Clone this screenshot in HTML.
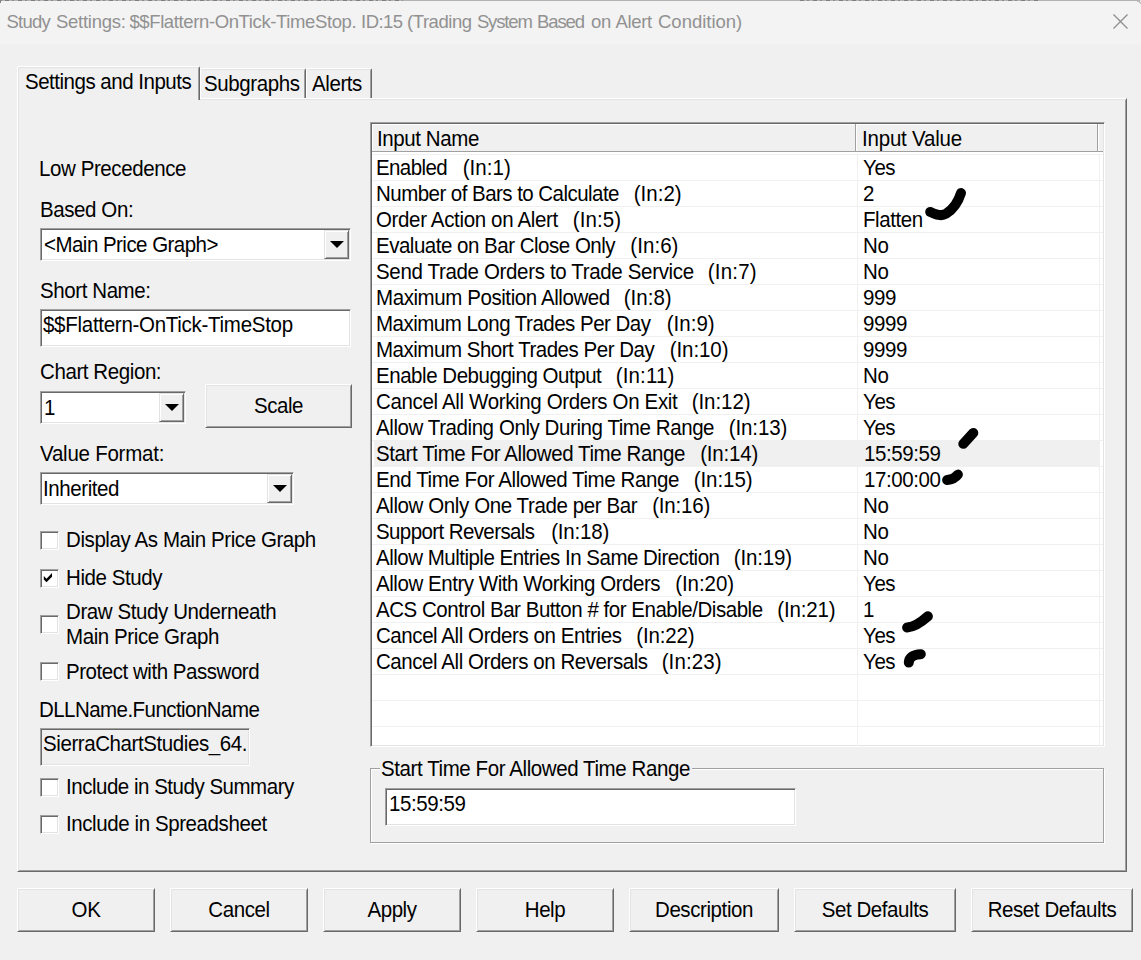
<!DOCTYPE html>
<html><head><meta charset="utf-8"><title>Study Settings</title>
<style>
*{box-sizing:border-box;margin:0;padding:0}
html,body{width:1141px;height:960px;overflow:hidden;background:#f0f0f0}
body{position:relative;font-family:"Liberation Sans",Arial,sans-serif;font-size:20.5px;color:#000;line-height:24px;-webkit-text-stroke:0}
.abs{position:absolute;white-space:nowrap}
#titlebar{position:absolute;left:0;top:0;width:1141px;height:44px;background:#f3f3f3}
#title{position:absolute;left:7px;top:10px;font-size:18.5px;color:#919191;white-space:nowrap;line-height:24px;letter-spacing:-0.37px;-webkit-text-stroke:0}
.sunken{position:absolute;background:#fff;border:1px solid;border-color:#a0a0a0 #fff #fff #a0a0a0;box-shadow:inset 1px 1px 0 #696969,inset -1px -1px 0 #e3e3e3}
.raised{position:absolute;background:#f0f0f0;border:1px solid;border-color:#e3e3e3 #696969 #696969 #e3e3e3;box-shadow:inset 1px 1px 0 #fff,inset -1px -1px 0 #a0a0a0}
.btn{position:absolute;background:#f0f0f0;border:1px solid;border-color:#fff #696969 #696969 #fff;box-shadow:inset 1px 1px 0 #e3e3e3,inset -1px -1px 0 #a0a0a0;text-align:center;white-space:nowrap}
.lbl,.tx{position:absolute;white-space:nowrap;line-height:24px;letter-spacing:-0.41px;transform:scaleY(1.066);transform-origin:0 0}
.c{display:inline-block;letter-spacing:-0.41px;transform:scaleY(1.066);transform-origin:50% 50%}
.cb{position:absolute;width:19px;height:19px;background:#fff;border:1px solid;border-color:#a0a0a0 #fff #fff #a0a0a0;box-shadow:inset 1px 1px 0 #696969,inset -1px -1px 0 #e3e3e3}
.arrow{position:absolute;width:0;height:0;border-left:7px solid transparent;border-right:7px solid transparent;border-top:7px solid #000}
.row{position:absolute;left:0;width:731px;height:26px;border-top:1px solid #f0f0f0}
.row span{position:absolute;top:0px;line-height:24px;white-space:nowrap;letter-spacing:-0.41px;transform:scaleY(1.066);transform-origin:0 0}
.row .n{left:4px}
.row .v{left:491px}
.row .k{left:100px}
.row.sel:before{content:"";position:absolute;left:2px;top:0;width:725px;height:25px;background:#f0f0f0}
.vl{position:absolute;top:0;width:1px;height:592px;background:#f0f0f0}
</style></head><body>
<div id="titlebar"><div id="title"><span style="position:absolute;left:-0.5px;letter-spacing:-0.76px">Study </span><span style="position:absolute;left:49.0px;letter-spacing:-0.26px">Settings: </span><span style="position:absolute;left:122.4px;letter-spacing:-0.38px">$$Flattern-OnTick-TimeStop. </span><span style="position:absolute;left:354.1px;letter-spacing:-0.56px">ID:15 </span><span style="position:absolute;left:400.0px;letter-spacing:-0.44px">(Trading </span><span style="position:absolute;left:469.9px;letter-spacing:-1.14px">System </span><span style="position:absolute;left:530.1px;letter-spacing:-1.12px">Based </span><span style="position:absolute;left:583.9px;letter-spacing:-0.28px">on </span><span style="position:absolute;left:608.4px;letter-spacing:-0.32px">Alert </span><span style="position:absolute;left:651.0px;letter-spacing:-0.01px">Condition) </span></div>
<svg class="abs" style="left:1113px;top:14px" width="15" height="15" viewBox="0 0 15 15"><path d="M0.5 0.5 L14.5 14.5 M14.5 0.5 L0.5 14.5" stroke="#8d8d8d" stroke-width="1.25" fill="none"/></svg>
</div>

<!-- top edge -->
<div class="abs" style="left:0;top:0;width:1141px;height:1px;background:#b2b2b2"></div>
<div class="abs" style="left:5px;top:0;width:398px;height:1px;background:repeating-linear-gradient(90deg,#7e7e7e 0 4px,#b2b2b2 4px 7px,#8a8a8a 7px 9px,#b2b2b2 9px 13px)"></div>
<div class="abs" style="left:800px;top:0;width:240px;height:1px;background:repeating-linear-gradient(90deg,#7e7e7e 0 4px,#b2b2b2 4px 7px,#8a8a8a 7px 9px,#b2b2b2 9px 13px)"></div>
<div class="abs" style="left:0;top:0;width:1px;height:3px;background:#828282"></div>
<div class="abs" style="left:1px;top:0;width:1px;height:1px;background:#8a8a8a"></div>
<div class="abs" style="left:1137px;top:1px;width:3px;height:1px;background:#bcbcbc"></div>
<div class="abs" style="left:1139px;top:2px;width:2px;height:1px;background:#bcbcbc"></div>
<div class="abs" style="left:1140px;top:3px;width:1px;height:1px;background:#c4c4c4"></div>
<div class="abs" style="left:1140px;top:0;width:1px;height:1px;background:#e4e4e4"></div>

<!-- tab panel -->
<div id="panel" class="abs" style="left:17px;top:98px;width:1110px;height:774px;border:1px solid;border-color:#fff #696969 #696969 #fff;box-shadow:inset 1px 1px 0 #e3e3e3,inset -1px -1px 0 #a0a0a0"></div>
<!-- tabs -->
<div id="tab1" class="abs" style="left:17px;top:66px;width:183px;height:34px;background:#f0f0f0;border:1px solid;border-color:#fff #696969 transparent #fff;border-bottom:none;box-shadow:inset 1px 1px 0 #e3e3e3,inset -1px 0 0 #a0a0a0;border-radius:2px 2px 0 0"><span class="tx" style="left:7px;top:2px;letter-spacing:-0.49px">Settings and Inputs</span></div>
<div id="tab2" class="abs" style="left:200px;top:68px;width:106px;height:30px;border:1px solid;border-color:#fff #696969 transparent #fff;border-bottom:none;box-shadow:inset 0 1px 0 #e3e3e3,inset -1px 0 0 #a0a0a0;border-radius:2px 2px 0 0"><span class="tx" style="left:3px;top:2px">Subgraphs</span></div>
<div id="tab3" class="abs" style="left:306px;top:68px;width:66px;height:30px;border:1px solid;border-color:#fff #696969 transparent #fff;border-bottom:none;box-shadow:inset 0 1px 0 #e3e3e3,inset -1px 0 0 #a0a0a0;border-radius:2px 2px 0 0"><span class="tx" style="left:5px;top:2px">Alerts</span></div>

<!-- left column -->
<div class="lbl" style="left:39px;top:156px">Low Precedence</div>
<div class="lbl" style="left:40px;top:197px">Based On:</div>
<div class="sunken" style="left:40px;top:228px;width:311px;height:33px"><span class="lbl" style="left:3px;top:3px;letter-spacing:-0.53px">&lt;Main Price Graph&gt;</span>
  <div class="raised" style="left:283px;top:1px;width:25px;height:29px"><i class="arrow" style="left:5px;top:10px"></i></div></div>
<div class="lbl" style="left:40px;top:278px">Short Name:</div>
<div class="sunken" style="left:40px;top:309px;width:311px;height:38px"><span class="lbl" style="left:2px;top:2px;letter-spacing:-0.28px">$$Flattern-OnTick-TimeStop</span></div>
<div class="lbl" style="left:40px;top:359px">Chart Region:</div>
<div class="sunken" style="left:40px;top:391px;width:146px;height:33px"><span class="lbl" style="left:3px;top:3px">1</span>
  <div class="raised" style="left:118px;top:1px;width:25px;height:29px"><i class="arrow" style="left:5px;top:10px"></i></div></div>
<div class="btn" style="left:205px;top:384px;width:147px;height:44px;line-height:42px"><span class="c">Scale</span></div>
<div class="lbl" style="left:40px;top:441px;letter-spacing:-0.24px">Value Format:</div>
<div class="sunken" style="left:40px;top:472px;width:254px;height:33px"><span class="lbl" style="left:2px;top:3px">Inherited</span>
  <div class="raised" style="left:226px;top:1px;width:25px;height:29px"><i class="arrow" style="left:5px;top:10px"></i></div></div>

<div class="cb" style="left:40px;top:531px"></div><div class="lbl" style="left:66px;top:527px">Display As Main Price Graph</div>
<div class="cb" style="left:40px;top:569px"><svg class="abs" style="left:0;top:0" width="17" height="17" viewBox="0 0 17 17"><path d="M2.8 6 L5.5 8.7 L11 3 L11 6.7 L5.5 12.2 L2.8 9.5 Z" fill="#000"/></svg></div><div class="lbl" style="left:66px;top:565px">Hide Study</div>
<div class="cb" style="left:40px;top:615px"></div><div class="lbl" style="left:66px;top:599px;line-height:23.45px">Draw Study Underneath<br>Main Price Graph</div>
<div class="cb" style="left:40px;top:662px"></div><div class="lbl" style="left:66px;top:659px;letter-spacing:-0.46px">Protect with Password</div>
<div class="lbl" style="left:39px;top:697px;letter-spacing:-0.55px">DLLName.FunctionName</div>
<div class="sunken" style="left:40px;top:728px;width:210px;height:38px;background:#f0f0f0"><span class="lbl" style="left:2px;top:2px">SierraChartStudies_64.</span></div>
<div class="cb" style="left:40px;top:778px"></div><div class="lbl" style="left:66px;top:774px;letter-spacing:-0.48px">Include in Study Summary</div>
<div class="cb" style="left:40px;top:815px"></div><div class="lbl" style="left:66px;top:811px">Include in Spreadsheet</div>

<!-- list view -->
<div id="list" class="sunken" style="left:370px;top:122px;width:735px;height:625px;overflow:hidden">
  <div id="hdr" style="position:absolute;left:1px;top:1px;width:731px;height:28px;background:#f0f0f0;border-bottom:1px solid #a0a0a0">
    <div style="position:absolute;left:0;top:0;width:484px;height:27px;border-right:1px solid #a0a0a0;box-shadow:inset 1px 1px 0 #fff,1px 0 0 #fff"><span class="tx" style="left:5px;top:2px">Input Name</span></div>
    <div style="position:absolute;left:484px;top:0;width:242px;height:27px;border-right:1px solid #a0a0a0;box-shadow:inset 0 1px 0 #fff,1px 0 0 #fff"><span class="tx" style="left:6px;top:2px;letter-spacing:-0.2px">Input Value</span></div>
  </div>
  <div id="rows" style="position:absolute;left:1px;top:31px;width:731px;height:592px">
    <div class="row" style="top:0px"><span class="n" style="letter-spacing:-0.60px">Enabled &nbsp; </span><span class="k" style="left:90.7px;letter-spacing:0.06px">(In:1) </span><span class="v">Yes</span></div>
    <div class="row" style="top:26px"><span class="n" style="letter-spacing:-0.54px">Number of Bars to Calculate &nbsp; </span><span class="k" style="left:261.8px;letter-spacing:-0.00px">(In:2) </span><span class="v">2</span></div>
    <div class="row" style="top:52px"><span class="n" style="letter-spacing:-0.35px">Order Action on Alert &nbsp; </span><span class="k" style="left:200.7px;letter-spacing:0.12px">(In:5) </span><span class="v">Flatten</span></div>
    <div class="row" style="top:78px"><span class="n" style="letter-spacing:-0.49px">Evaluate on Bar Close Only &nbsp; </span><span class="k" style="left:258.3px;letter-spacing:0.06px">(In:6) </span><span class="v">No</span></div>
    <div class="row" style="top:104px"><span class="n" style="letter-spacing:-0.34px">Send Trade Orders to Trade Service &nbsp; </span><span class="k" style="left:335.8px;letter-spacing:0.19px">(In:7) </span><span class="v">No</span></div>
    <div class="row" style="top:130px"><span class="n" style="letter-spacing:-0.42px">Maximum Position Allowed &nbsp; </span><span class="k" style="left:251.7px;letter-spacing:0.03px">(In:8) </span><span class="v">999</span></div>
    <div class="row" style="top:156px"><span class="n" style="letter-spacing:-0.51px">Maximum Long Trades Per Day &nbsp; </span><span class="k" style="left:294.7px;letter-spacing:0.03px">(In:9) </span><span class="v">9999</span></div>
    <div class="row" style="top:182px"><span class="n" style="letter-spacing:-0.48px">Maximum Short Trades Per Day &nbsp; </span><span class="k" style="left:297.7px;letter-spacing:-0.07px">(In:10) </span><span class="v">9999</span></div>
    <div class="row" style="top:208px"><span class="n" style="letter-spacing:-0.46px">Enable Debugging Output &nbsp; </span><span class="k" style="left:243.7px;letter-spacing:0.17px">(In:11) </span><span class="v">No</span></div>
    <div class="row" style="top:234px"><span class="n" style="letter-spacing:-0.35px">Cancel All Working Orders On Exit &nbsp; </span><span class="k" style="left:319.7px;letter-spacing:-0.05px">(In:12) </span><span class="v">Yes</span></div>
    <div class="row" style="top:260px"><span class="n" style="letter-spacing:-0.42px">Allow Trading Only During Time Range &nbsp; </span><span class="k" style="left:356.7px;letter-spacing:-0.10px">(In:13) </span><span class="v">Yes</span></div>
    <div class="row sel" style="top:286px"><span class="n" style="letter-spacing:-0.41px">Start Time For Allowed Time Range &nbsp; </span><span class="k" style="left:328.2px;letter-spacing:-0.18px">(In:14) </span><span class="v" style="margin-left:1px">15:59:59</span></div>
    <div class="row" style="top:312px"><span class="n" style="letter-spacing:-0.41px">End Time For Allowed Time Range &nbsp; </span><span class="k" style="left:321.7px;letter-spacing:-0.05px">(In:15) </span><span class="v" style="margin-left:1px">17:00:00</span></div>
    <div class="row" style="top:338px"><span class="n" style="letter-spacing:-0.40px">Allow Only One Trade per Bar &nbsp; </span><span class="k" style="left:280.2px;letter-spacing:-0.18px">(In:16) </span><span class="v">No</span></div>
    <div class="row" style="top:364px"><span class="n" style="letter-spacing:-0.60px">Support Reversals &nbsp; </span><span class="k" style="left:179.2px;letter-spacing:-0.18px">(In:18) </span><span class="v">No</span></div>
    <div class="row" style="top:390px"><span class="n" style="letter-spacing:-0.50px">Allow Multiple Entries In Same Direction &nbsp; </span><span class="k" style="left:361.7px;letter-spacing:-0.13px">(In:19) </span><span class="v">No</span></div>
    <div class="row" style="top:416px"><span class="n" style="letter-spacing:-0.45px">Allow Entry With Working Orders &nbsp; </span><span class="k" style="left:303.2px;letter-spacing:-0.05px">(In:20) </span><span class="v">Yes</span></div>
    <div class="row" style="top:442px"><span class="n" style="letter-spacing:-0.47px">ACS Control Bar Button # for Enable/Disable &nbsp; </span><span class="k" style="left:405.3px;letter-spacing:-0.18px">(In:21) </span><span class="v">1</span></div>
    <div class="row" style="top:468px"><span class="n" style="letter-spacing:-0.43px">Cancel All Orders on Entries &nbsp; </span><span class="k" style="left:264.2px;letter-spacing:-0.13px">(In:22) </span><span class="v">Yes</span></div>
    <div class="row" style="top:494px"><span class="n" style="letter-spacing:-0.44px">Cancel All Orders on Reversals &nbsp; </span><span class="k" style="left:289.7px;letter-spacing:0.11px">(In:23) </span><span class="v">Yes</span></div>
    <div class="row" style="top:520px"></div>
    <div class="row" style="top:546px"></div>
    <div class="row" style="top:572px"></div>
    <i class="vl" style="left:485px"></i><i class="vl" style="left:727px"></i>
  </div>
</div>

<!-- group box -->
<div class="abs" style="left:370px;top:768px;width:734px;height:75px;border:1px solid #a0a0a0;box-shadow:1px 1px 0 #fff,inset 1px 1px 0 #fff"></div>
<div class="lbl" style="left:380px;top:756px;background:#f0f0f0;padding:0 2px 0 1px">Start Time For Allowed Time Range</div>
<div class="sunken" style="left:385px;top:788px;width:411px;height:38px"><span class="lbl" style="left:3px;top:2px">15:59:59</span></div>

<!-- pen marks -->
<svg class="abs" style="left:0;top:0;pointer-events:none" width="1141" height="960" viewBox="0 0 1141 960" fill="none" stroke="#000" stroke-width="10" stroke-linecap="round" stroke-linejoin="round">
<path d="M930.2 211.9 C936 214.5 941 216.8 946 213.8 C953 209.5 958 202.5 961 193"/>
<path d="M963.3 443.8 L973.3 432.9"/>
<path d="M947.1 480 C950 479.8 955 478.5 957.9 474.6"/>
<path d="M907.1 627.5 C915 627 921 622.5 927.9 616.3"/>
<path d="M908.8 662.5 C909 657.5 913 654.5 920.8 654.2"/>
</svg>
<!-- buttons -->
<div class="btn" style="left:17px;top:888px;width:138px;height:44px;line-height:42px"><span class="c">OK</span></div>
<div class="btn" style="left:170px;top:888px;width:138px;height:44px;line-height:42px"><span class="c">Cancel</span></div>
<div class="btn" style="left:323px;top:888px;width:138px;height:44px;line-height:42px"><span class="c">Apply</span></div>
<div class="btn" style="left:476px;top:888px;width:138px;height:44px;line-height:42px"><span class="c">Help</span></div>
<div class="btn" style="left:629px;top:888px;width:150px;height:44px;line-height:42px"><span class="c">Description</span></div>
<div class="btn" style="left:794px;top:888px;width:162px;height:44px;line-height:42px"><span class="c">Set Defaults</span></div>
<div class="btn" style="left:971px;top:888px;width:162px;height:44px;line-height:42px"><span class="c">Reset Defaults</span></div>
</body></html>
